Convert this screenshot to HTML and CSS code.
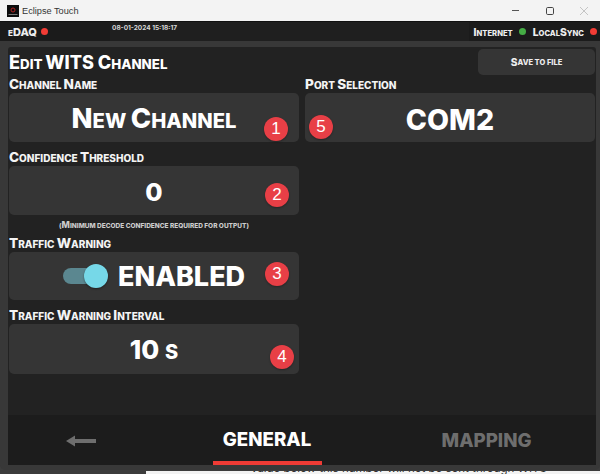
FILE: index.html
```html
<!DOCTYPE html>
<html lang="en">
<head>
<meta charset="utf-8">
<title>Eclipse Touch</title>
<link rel="stylesheet" href="styles.css">
</head>
<body>
<div class="titlebar">
  <div class="logo"><svg width="12" height="12" viewBox="0 0 12 12"><rect width="12" height="12" fill="#0c0c0c"/><circle cx="6" cy="5" r="2" fill="none" stroke="#b02020" stroke-width="1"/><rect x="1.5" y="9" width="9" height="1" fill="#777"/></svg></div>
  <span class="app-name">Eclipse Touch</span>
  <div class="win-controls">
    <svg width="10" height="10" viewBox="0 0 10 10"><path d="M1 4.5H8" stroke="#555" stroke-width="1"/></svg>
    <svg width="10" height="10" viewBox="0 0 10 10"><rect x="1.5" y="1.5" width="7" height="7" rx="1.2" fill="none" stroke="#444" stroke-width="1"/></svg>
    <svg width="10" height="10" viewBox="0 0 10 10"><path d="M1 1L9 9M9 1L1 9" stroke="#c4c4c4" stroke-width="1"/></svg>
  </div>
</div>
<div class="app">
  <header class="status">
    <div class="status-left"><span class="sc status-edaq">e<span class="cap">DAQ</span></span><i class="dot red"></i></div>
    <div class="clock">08-01-2024 15:18:17</div>
    <div class="status-right"><span class="sc status-label"><span class="cap">I</span>nternet</span><i class="dot green"></i><span class="sc status-label"><span class="cap">L</span>ocal<span class="cap">S</span>ync</span><i class="dot red"></i></div>
  </header>
  <main class="panel">
    <div class="content">
      <div class="col">
        <h1 class="sc title"><span class="cap">E</span>dit <span class="cap">WITS C</span>hannel</h1>
        <label class="sc label"><span class="cap">C</span>hannel <span class="cap">N</span>ame</label>
        <div class="field"><span class="sc value-name"><span class="cap">N</span>ew <span class="cap">C</span>hannel</span><b class="badge b1">1</b></div>
        <label class="sc label gap-a"><span class="cap">C</span>onfidence <span class="cap">T</span>hreshold</label>
        <div class="field"><span class="value">0</span><b class="badge b2">2</b></div>
        <p class="sc hint">(<span class="cap">M</span>inimum decode confidence required for output)</p>
        <label class="sc label"><span class="cap">T</span>raffic <span class="cap">W</span>arning</label>
        <div class="field toggle-field">
          <span class="toggle"><i class="track"></i><i class="knob"></i></span>
          <span class="value-big">ENABLED</span><b class="badge b3">3</b>
        </div>
        <label class="sc label gap-a"><span class="cap">T</span>raffic <span class="cap">W</span>arning <span class="cap">I</span>nterval</label>
        <div class="field tall"><span class="value interval">10 <span class="unit">s</span></span><b class="badge b4">4</b></div>
      </div>
      <div class="col">
        <div class="save-row"><div class="sc save"><span class="cap">S</span>ave to file</div></div>
        <label class="sc label"><span class="cap">P</span>ort <span class="cap">S</span>election</label>
        <div class="field"><span class="value-big port">COM2</span><b class="badge b5">5</b></div>
      </div>
    </div>
    <nav class="tabs">
      <div class="tab back"><svg width="30" height="12" viewBox="0 0 30 12"><path d="M30 6H8" stroke="#6e6e6e" stroke-width="4"/><path d="M0 6L9 0.5V11.5Z" fill="#6e6e6e"/></svg></div>
      <div class="tab active">GENERAL</div>
      <div class="tab muted">MAPPING</div>
    </nav>
  </main>
  <div class="strip"></div>
</div>
<div class="below"><span class="below-text">value below this number will not be sent through WITS</span></div>
</body>
</html>
```
FILE: styles.css
```css
* { box-sizing: border-box; }
html, body { margin: 0; padding: 0; }
body { width: 600px; height: 474px; overflow: hidden; background: #3c3c3c; font-family: "Inter", "Liberation Sans", sans-serif; color: #fff; position: relative; }
.titlebar { height: 21px; background: #f3f3f3; display: flex; align-items: center; padding-left: 7px; color: #333; }
.logo { width: 12px; height: 12px; display: flex; }
.app-name { margin-left: 3px; font-family: "Liberation Sans", sans-serif; font-size: 9.2px; }
.win-controls { margin-left: auto; display: flex; gap: 24px; padding-right: 11px; }
.app { height: 449px; background: #383838; border-top: 1px solid #111; border-radius: 0 0 5px 5px; display: flex; flex-direction: column; padding: 0 4px 0 2px; }
.sc { text-transform: uppercase; font-weight: 800; }
.cap { font-size: 1.36em; }
.status { height: 19px; flex: none; margin: 0 -4px 0 -2px; display: flex; background: #1f1f1f; align-items: stretch; }
.status-left { width: 110px; background: #1b1b1b; display: flex; align-items: center; padding-left: 8px; gap: 4px; }
.status-edaq { font-size: 8.1px; color: #eee; }
.clock { font-size: 6.5px; font-weight: 700; color: #d8d8d8; padding: 2px 0 0 2px; }
.status-right { margin-left: auto; padding: 0 3px 0 5px; display: flex; align-items: center; gap: 6px; background: #1b1b1b; }
.status-label { color: #eee; font-size: 7.6px; }
.dot { width: 7px; height: 7px; border-radius: 50%; display: block; }
.dot.red { background: #f23c35; }
.dot.green { background: #45ad45; margin-right: 1px; }
.panel { margin: 6px 0 0 5.5px; flex: 1; background: #222; display: flex; flex-direction: column; min-height: 0; border-radius: 3px 3px 0 0; }
.content { flex: 1; display: flex; padding: 0 1px 0 1.5px; gap: 6px; }
.col { flex: 1; min-width: 0; }
.col:first-child { flex: 0 0 290px; }
.title { margin: 0; font-size: 13.3px; line-height: 31px; height: 30px; }
.label { display: block; font-size: 10px; line-height: 15px; height: 16px; color: #f4f4f4; }
.gap-a { margin-top: 8px; }
.field { position: relative; height: 49px; background: #353535; border-radius: 5px; display: flex; align-items: center; justify-content: center; }
.tall { height: 50px; }
.toggle-field { height: 48px; justify-content: flex-start; padding-left: 54px; gap: 10px; }
.value-name { font-size: 20.2px; line-height: 1; padding-top: 3px; }
.value { font-size: 25px; font-weight: 800; padding-top: 2px; }
.interval { font-size: 26px; padding-top: 0; }
.unit { font-size: 20px; text-transform: uppercase; }
.value-big { font-size: 27px; font-weight: 800; }
.port { font-size: 28.5px; padding-top: 3px; }
.hint { margin: 3px 0; text-align: center; font-size: 6.5px; line-height: 14px; color: #ccc; }
.toggle { position: relative; width: 45px; height: 24px; display: block; }
.track { position: absolute; left: 0; top: 4px; width: 40px; height: 16px; border-radius: 8px; background: #5b8790; }
.knob { position: absolute; left: 21px; top: 0; width: 24px; height: 24px; border-radius: 50%; background: #76d8e8; box-shadow: 0 1px 2px rgba(0,0,0,.4); }
.badge { position: absolute; width: 24px; height: 24px; border-radius: 50%; background: #e83f46; color: #fff; font: 400 17px/24px "Liberation Sans", sans-serif; text-align: center; box-shadow: 0 1px 2px rgba(0,0,0,.3); }
.b1 { left: 255px; top: 24px; }
.b2 { left: 256px; top: 17px; }
.b3 { left: 256px; top: 10px; }
.b4 { left: 261px; top: 21px; }
.b5 { left: 4px; top: 22px; }
.save-row { display: flex; justify-content: flex-end; height: 30px; padding-top: 2px; }
.save { width: 117px; height: 26px; background: #353535; border-radius: 5px; display: flex; align-items: center; justify-content: center; font-size: 7.5px; color: #eee; white-space: pre-wrap; }
.tabs { flex: none; height: 50px; background: #1c1c1c; display: flex; align-items: center; position: relative; }
.tab { font-size: 18.7px; font-weight: 800; display: flex; align-items: center; justify-content: center; height: 100%; }
.back { width: 147px; padding-top: 2px; }
.active { width: 109px; margin-left: 58px; border-bottom: 4px solid #ef3b35; padding-top: 2px; }
.muted { color: #6e6e6e; margin-left: 120px; padding-top: 1px; }
.strip { height: 5px; flex: none; }
.below { position: absolute; left: 146px; right: 0; bottom: 0; height: 3px; background: #f2f2f2; overflow: hidden; color: #333; font-size: 11.5px; line-height: 12px; }
.below-text { display: block; margin: -9px 0 0 105px; }
```
